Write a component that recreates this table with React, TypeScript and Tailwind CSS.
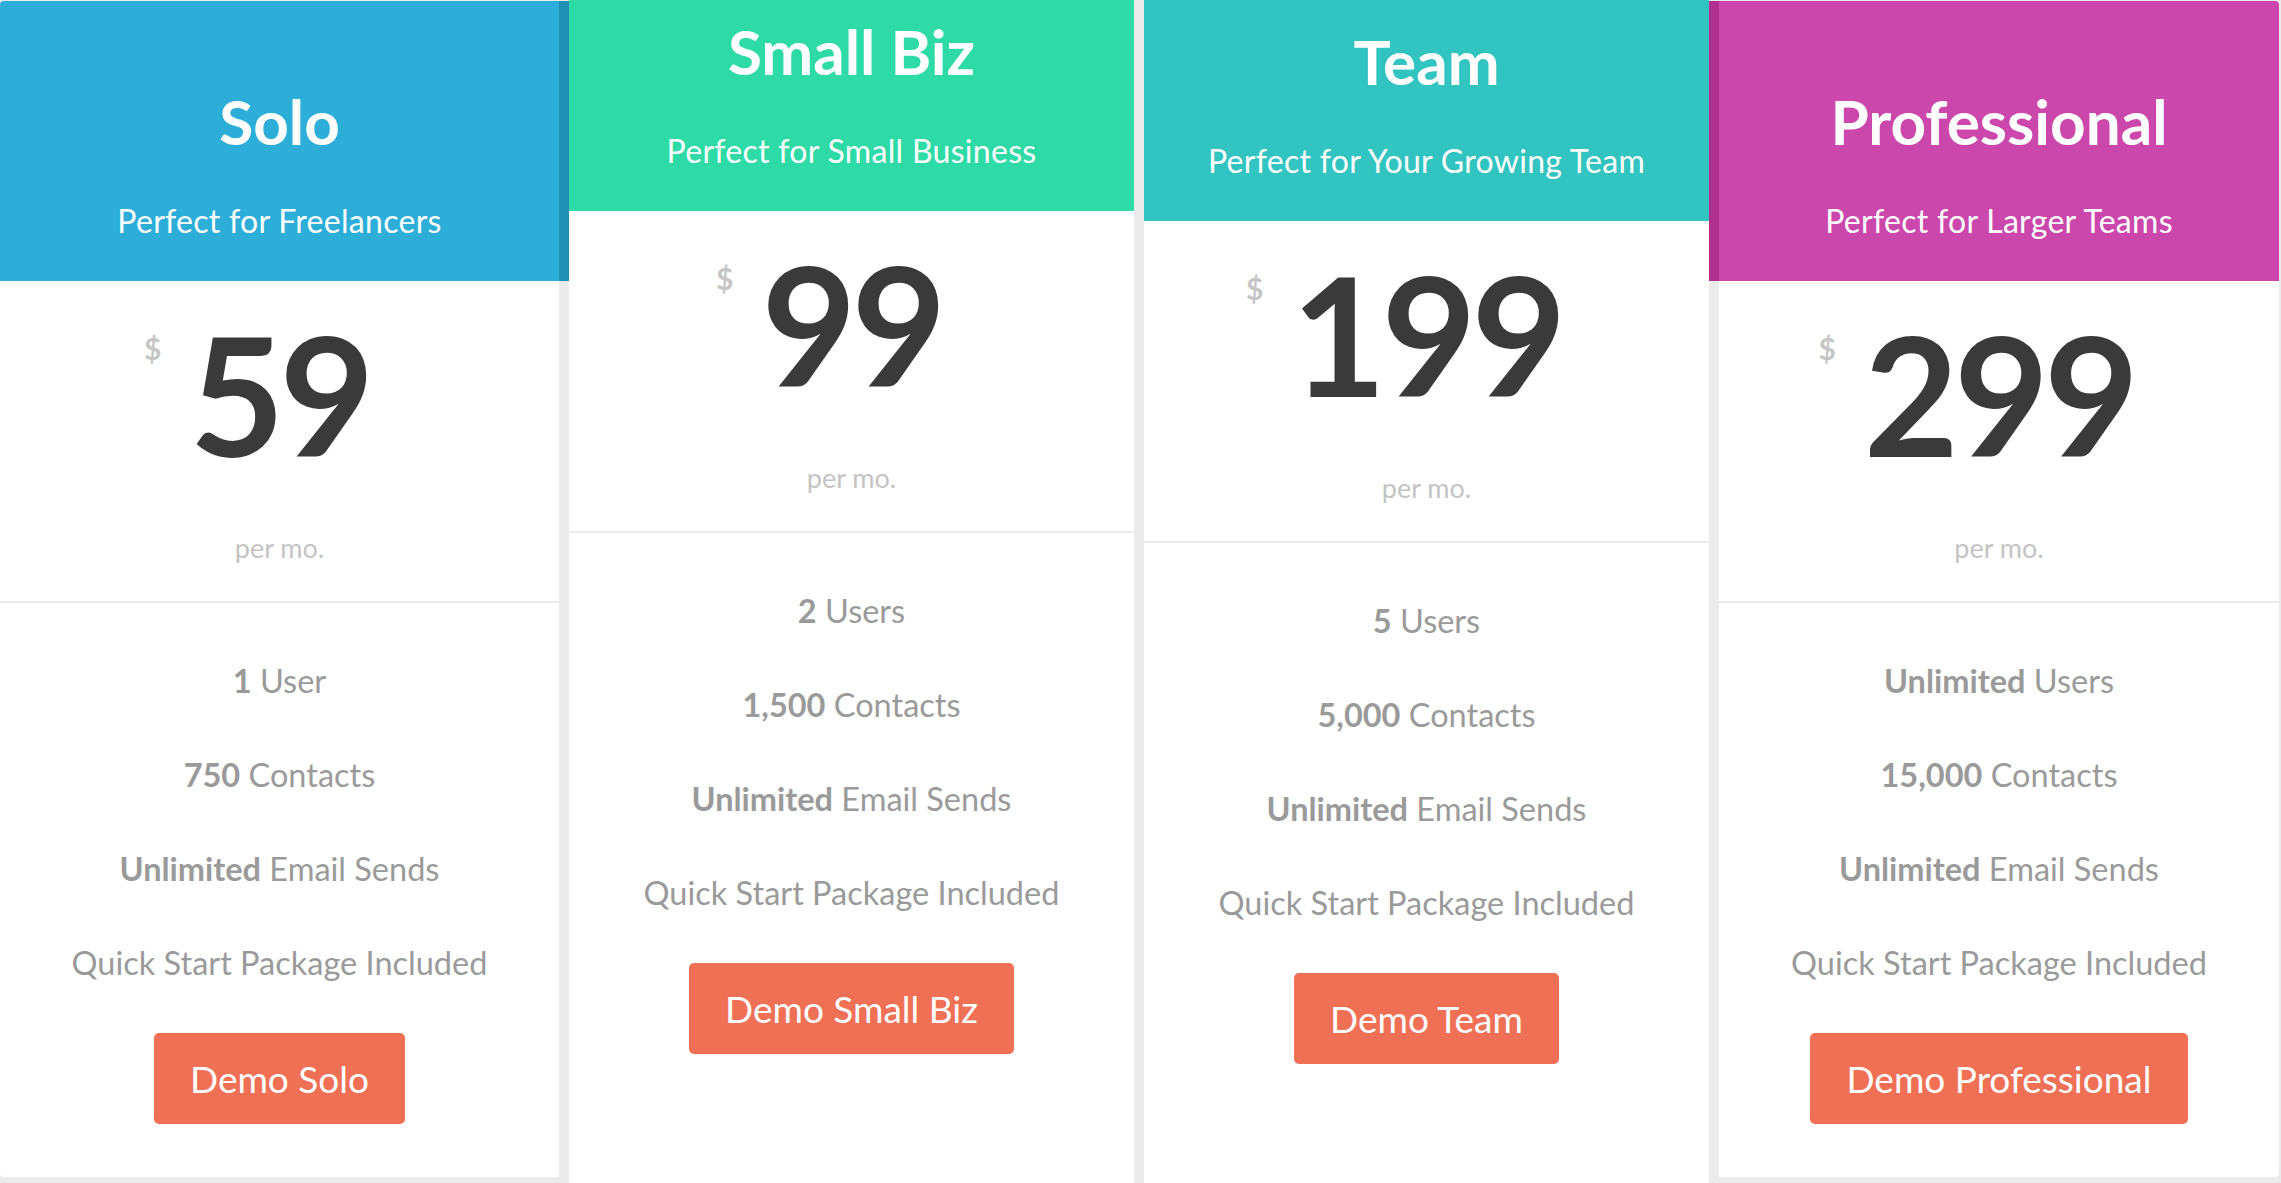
const plans = [
  {
    name: "Solo",
    tagline: "Perfect for Freelancers",
    price: "59",
    users: ["1", " User"],
    contacts: "750",
    button: "Demo Solo",
  },
  {
    name: "Small Biz",
    tagline: "Perfect for Small Business",
    price: "99",
    users: ["2", " Users"],
    contacts: "1,500",
    button: "Demo Small Biz",
  },
  {
    name: "Team",
    tagline: "Perfect for Your Growing Team",
    price: "199",
    users: ["5", " Users"],
    contacts: "5,000",
    button: "Demo Team",
  },
  {
    name: "Professional",
    tagline: "Perfect for Larger Teams",
    price: "299",
    users: ["Unlimited", " Users"],
    contacts: "15,000",
    button: "Demo Professional",
  },
];

type Plan = (typeof plans)[number];

const PlanHeader = ({ plan, className }: { plan: Plan; className: string }) => {
  return (
    <div className={className}>
      <h2 className="text-[62px] leading-[60px] font-bold text-white">{plan.name}</h2>
      <p className="mt-[54px] text-[32px] leading-[32px] tracking-[0.3px] text-white">
        {plan.tagline}
      </p>
    </div>
  );
};

const PlanBody = ({ plan }: { plan: Plan }) => {
  return (
    <div className="text-center">
      <div className="h-[320px] pt-[30px]">
        <div className="relative inline-block text-[164px] leading-[165px] font-bold text-[#3a3a3a] tracking-[-5px]">
          <span className="absolute right-full top-[17px] mr-[28px] text-[30px] leading-[40px] font-bold text-[#c6c6c6] tracking-normal">
            $
          </span>
          {plan.price}
        </div>
        <p className="mt-[59px] text-[27px] leading-[26px] text-[#c4c4c4]">per mo.</p>
      </div>
      <div className="border-t-2 border-[#ececec] pt-[31px] text-[32.5px] leading-[94px] text-[#9a9a9a]">
        <p>
          <b className="font-bold">{plan.users[0]}</b>
          {plan.users[1]}
        </p>
        <p>
          <b className="font-bold">{plan.contacts}</b> Contacts
        </p>
        <p>
          <b className="font-bold">Unlimited</b> Email Sends
        </p>
        <p>Quick Start Package Included</p>
        <button className="mt-[23px] h-[91px] rounded-[5px] bg-[#f07056] px-[36px] text-[37px] leading-[91px] text-white">
          {plan.button}
        </button>
      </div>
    </div>
  );
};

export default function App() {
  return (
    <div className="flex h-[1183px] w-[2281px] overflow-hidden bg-[#ebebeb] font-['Lato',sans-serif] antialiased">
      {/* Solo: header runs over the gutter in a darker shade */}
      <div className="flex w-[569px] flex-col pt-px">
        <div className="flex h-[280px]">
          <PlanHeader
            plan={plans[0]}
            className="flex-1 rounded-tl-[4px] bg-[#2caed9] pt-[90px] text-center"
          />
          <div className="w-[10px] bg-[#2190b6]" />
        </div>
        <div className="h-[896px] w-[559px] rounded-bl-[4px] bg-white">
          <PlanBody plan={plans[0]} />
        </div>
      </div>

      {/* Small Biz */}
      <div className="w-[565px] bg-white">
        <PlanHeader plan={plans[1]} className="h-[211px] bg-[#2edba6] pt-[21px] text-center" />
        <PlanBody plan={plans[1]} />
      </div>

      <div className="w-[10px]" />

      {/* Team */}
      <div className="w-[565px] bg-white">
        <PlanHeader plan={plans[2]} className="h-[221px] bg-[#32c4c0] pt-[31px] text-center" />
        <PlanBody plan={plans[2]} />
      </div>

      {/* Professional */}
      <div className="flex w-[570px] flex-col pt-px">
        <div className="flex h-[280px]">
          <div className="w-[10px] bg-[#b0308f]" />
          <PlanHeader
            plan={plans[3]}
            className="flex-1 rounded-tr-[4px] bg-[#cc47ac] pt-[90px] text-center"
          />
        </div>
        <div className="ml-[10px] h-[896px] w-[560px] rounded-br-[4px] bg-white">
          <PlanBody plan={plans[3]} />
        </div>
      </div>
    </div>
  );
}
